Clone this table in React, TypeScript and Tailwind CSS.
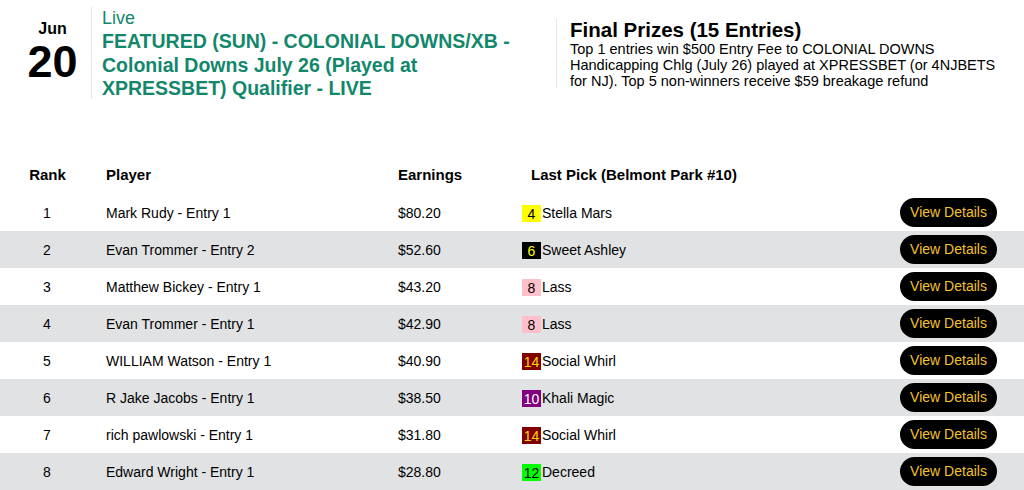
import React from "react";

type Row = {
  rank: number;
  player: string;
  earnings: string;
  num: string;
  horse: string;
  badge: string;
};

const rows: Row[] = [
  { rank: 1, player: "Mark Rudy - Entry 1", earnings: "$80.20", num: "4", horse: "Stella Mars", badge: "bg-[#ffff00] text-black" },
  { rank: 2, player: "Evan Trommer - Entry 2", earnings: "$52.60", num: "6", horse: "Sweet Ashley", badge: "bg-black text-[#ffff00]" },
  { rank: 3, player: "Matthew Bickey - Entry 1", earnings: "$43.20", num: "8", horse: "Lass", badge: "bg-[#ffc0cb] text-black" },
  { rank: 4, player: "Evan Trommer - Entry 1", earnings: "$42.90", num: "8", horse: "Lass", badge: "bg-[#ffc0cb] text-black" },
  { rank: 5, player: "WILLIAM Watson - Entry 1", earnings: "$40.90", num: "14", horse: "Social Whirl", badge: "bg-[#800000] text-[#ffd700]" },
  { rank: 6, player: "R Jake Jacobs - Entry 1", earnings: "$38.50", num: "10", horse: "Khali Magic", badge: "bg-[#800080] text-white" },
  { rank: 7, player: "rich pawlowski - Entry 1", earnings: "$31.80", num: "14", horse: "Social Whirl", badge: "bg-[#800000] text-[#ffd700]" },
  { rank: 8, player: "Edward Wright - Entry 1", earnings: "$28.80", num: "12", horse: "Decreed", badge: "bg-[#00ff00] text-black" },
];

export default function App() {
  return (
    <div className="w-[1024px] h-[490px] overflow-hidden bg-white text-black font-['Liberation_Sans',Arial,sans-serif]">
      {/* Header */}
      <div className="flex items-start pt-[7px]">
        <div className="w-[91px] flex flex-col items-center pl-[14px] pt-[14px]">
          <div className="text-[16px] font-bold leading-[16px]">Jun</div>
          <div className="text-[45px] font-bold leading-[40px] mt-[5px]">20</div>
        </div>
        <div className="w-[449px] h-[92px] border-l border-[#e6e6e6] pl-[10px] text-[#12876b]">
          <div className="text-[18px] leading-[21px] pt-[1px]">Live</div>
          <div className="text-[19.5px] font-bold leading-[23.5px] mt-[1px]">
            FEATURED (SUN) - COLONIAL DOWNS/XB - Colonial Downs July 26 (Played at XPRESSBET) Qualifier - LIVE
          </div>
        </div>
        <div className="ml-[16px] mt-[12px] h-[69px] border-l border-[#e6e6e6] pl-[13px]">
          <div className="text-[20.5px] font-bold leading-[22px]">Final Prizes (15 Entries)</div>
          <div className="text-[14.5px] leading-[16px] w-[440px]">
            Top 1 entries win $500 Entry Fee to COLONIAL DOWNS Handicapping Chlg (July 26) played at XPRESSBET (or 4NJBETS for NJ). Top 5 non-winners receive $59 breakage refund
          </div>
        </div>
      </div>

      {/* Table */}
      <div className="mt-[57px]">
        <div className="grid grid-cols-[94px_292px_124px_1fr_auto] items-center h-[38px] pr-[27px] text-[15px] font-bold">
          <div className="text-center pl-[1px]">Rank</div>
          <div className="pl-[12px]">Player</div>
          <div className="pl-[12px]">Earnings</div>
          <div className="pl-[21px]">Last Pick (Belmont Park #10)</div>
          <div className="w-[97px]" />
        </div>
        {rows.map((r, i) => (
          <div
            key={r.rank}
            className={`grid grid-cols-[94px_292px_124px_1fr_auto] items-center h-[37px] pr-[27px] text-[14px] ${
              i % 2 === 1 ? "bg-[#e1e2e4]" : "bg-white"
            }`}
          >
            <div className="text-center pt-[2px]">{r.rank}</div>
            <div className="pl-[12px] pt-[2px]">{r.player}</div>
            <div className="pl-[12px] pt-[2px]">{r.earnings}</div>
            <div className="pl-[12px] pt-[2px] flex items-center">
              <span className={`inline-flex items-center justify-center w-[19px] h-[17px] text-[14px] leading-none ${r.badge}`}>
                {r.num}
              </span>
              <span className="ml-[1px]">{r.horse}</span>
            </div>
            <button className="w-[97px] h-[29px] rounded-full bg-black text-[#f4c22b] text-[14px] flex items-center justify-center">
              View Details
            </button>
          </div>
        ))}
      </div>
    </div>
  );
}
